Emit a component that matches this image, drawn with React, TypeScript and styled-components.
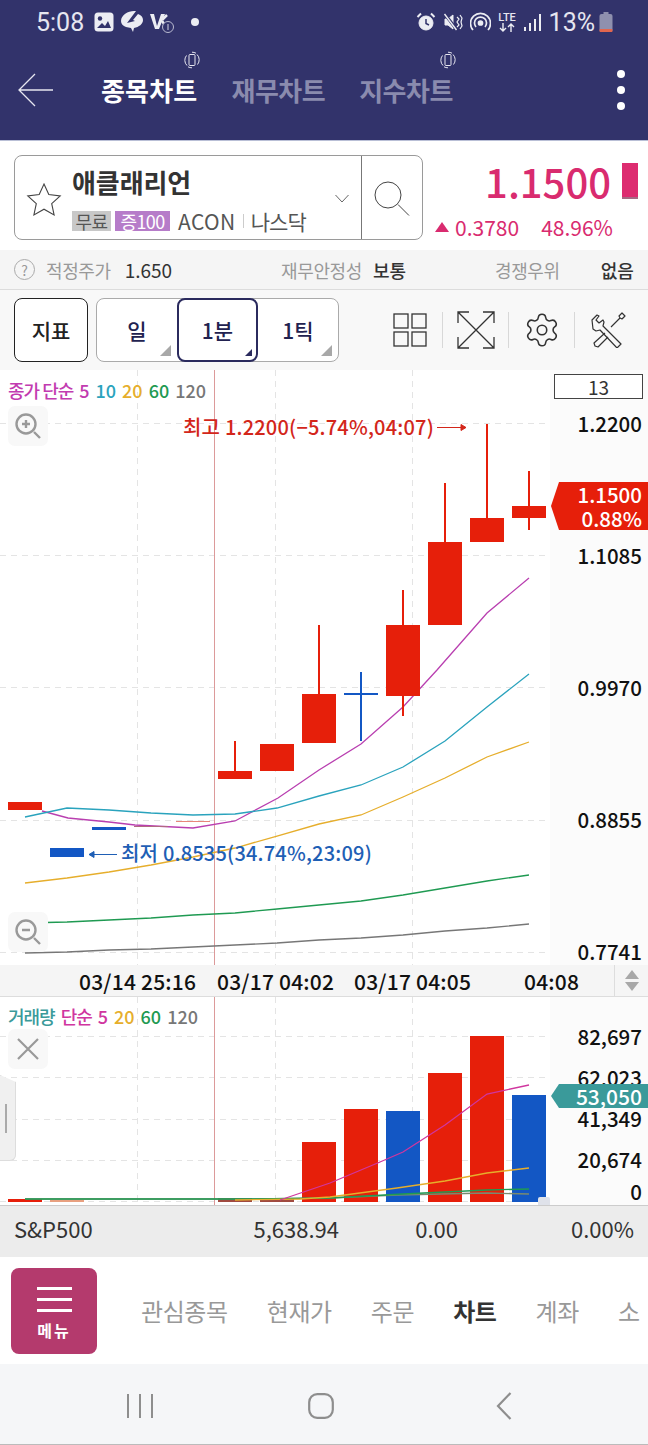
import React from "react";
import styled, { createGlobalStyle } from "styled-components";
import { Settings } from "lucide-react";

const KR = `"Noto Sans CJK KR", "Noto Sans", sans-serif`;

const GlobalStyle = createGlobalStyle`
  html, body {
    margin: 0;
    padding: 0;
    background: #fff;
    font-family: ${KR};
  }
  * {
    box-sizing: border-box;
  }
`;

const Page = styled.div`
  width: 648px;
  height: 1445px;
  position: relative;
  overflow: hidden;
`;

/* ---------- header ---------- */

const Header = styled.header`
  height: 141px;
  background: #32336b;
  border-bottom: 1px solid #b9bfd6;
`;

const StatusBar = styled.div`
  height: 44px;
  display: flex;
  align-items: center;
  justify-content: space-between;
  padding: 0 35px 0 36px;
  color: #e6e6f0;
  font-family: Roboto, sans-serif;
  font-size: 25px;
`;

const StatusGroup = styled.div<{ $gap: number }>`
  display: flex;
  align-items: center;
  gap: ${(p) => p.$gap}px;
`;

const StatusTime = styled.span`
  width: 48px;
  margin-right: 4px;
  white-space: nowrap;
`;

const StatusDot = styled.span`
  width: 8px;
  height: 8px;
  margin-left: 10px;
  border-radius: 50%;
  background: #ecedf3;
`;

const StatusLte = styled.div`
  width: 19px;
  display: flex;
  flex-direction: column;
  align-items: center;
  font-size: 11px;
  line-height: 11px;
  font-weight: 500;
`;

const BatterySlot = styled.span`
  display: flex;
  margin-left: -3px;
`;

const NavRow = styled.nav`
  height: 92px;
  display: flex;
  align-items: center;
  padding: 0 23px 0 18px;
`;

const BackButton = styled.div`
  width: 83px;
  display: flex;
  align-items: center;
`;

const Tabs = styled.div`
  display: flex;
  gap: 34px;
  flex: 1;
`;

const Tab = styled.div<{ $active?: boolean }>`
  position: relative;
  font-size: 26px;
  line-height: 34px;
  font-weight: 700;
  letter-spacing: ${(p) => (p.$active ? "0.2px" : "-0.5px")};
  color: ${(p) => (p.$active ? "#ffffff" : "#8a8bae")};
`;

const RotateBadge = styled.span<{ $left: number }>`
  position: absolute;
  left: ${(p) => p.$left}px;
  top: -22px;
  display: flex;
`;

const Kebab = styled.div`
  display: flex;
  flex-direction: column;
  gap: 8px;
`;

const KebabDot = styled.span`
  width: 8px;
  height: 8px;
  border-radius: 50%;
  background: #fff;
`;

/* ---------- stock header ---------- */

const StockSection = styled.section`
  height: 109px;
  display: flex;
  padding: 14px 14px 0;
  background: #fff;
`;

const StockBox = styled.div`
  flex: none;
  width: 409px;
  height: 85px;
  display: flex;
  border: 1px solid #9a9a9a;
  border-radius: 8px;
`;

const StarCell = styled.div`
  width: 57px;
  display: flex;
  align-items: center;
  padding: 4px 0 0 11px;
`;

const StockInfo = styled.div`
  flex: 1;
  display: flex;
  flex-direction: column;
  padding-top: 8px;
`;

const StockName = styled.div`
  font-size: 26px;
  line-height: 36px;
  font-weight: 700;
  letter-spacing: -0.1px;
  color: #333;
`;

const StockMeta = styled.div`
  display: flex;
  align-items: center;
  margin-top: 10px;
  font-size: 21px;
  line-height: 22px;
  color: #555;
`;

const Tag = styled.span<{ $bg: string; $fg: string; $w: number }>`
  width: ${(p) => p.$w}px;
  height: 20px;
  margin-right: 4px;
  display: flex;
  align-items: center;
  justify-content: center;
  font-size: 18px;
  letter-spacing: -0.6px;
  background: ${(p) => p.$bg};
  color: ${(p) => p.$fg};
`;

const MetaCode = styled.span`
  margin-left: 4px;
  letter-spacing: 0.4px;
`;

const MetaSplit = styled.span`
  width: 1px;
  height: 14px;
  margin: 0 7px 0 7px;
  background: #ccc;
`;

const MetaMarket = styled.span`
  letter-spacing: -0.9px;
`;

const ChevronCell = styled.div`
  width: 26px;
  display: flex;
  align-items: center;
  padding-top: 1px;
`;

const SearchCell = styled.div`
  width: 61px;
  display: flex;
  align-items: center;
  justify-content: center;
  border-left: 1px solid #777;
`;

const PriceCol = styled.div`
  flex: 1;
  display: flex;
  flex-direction: column;
  align-items: flex-end;
  color: #d92b6f;
`;

const PriceRow = styled.div`
  display: flex;
  align-items: center;
  gap: 11px;
  margin: 4px -4px 0 0;
  height: 44px;
`;

const PriceValue = styled.span`
  font-size: 40px;
  line-height: 44px;
  font-weight: 500;
`;

const PriceBar = styled.span`
  width: 16px;
  height: 36px;
  background: #dd2c70;
  border-bottom: 2px solid #a56a84;
`;

const ChangeRow = styled.div`
  width: 199px;
  margin-top: 11px;
  display: flex;
  align-items: center;
  font-size: 21px;
  line-height: 26px;
`;

const UpMark = styled.span`
  width: 0;
  height: 0;
  margin: 0 6px 0 0;
  border-left: 7px solid transparent;
  border-right: 7px solid transparent;
  border-bottom: 10px solid #d92b6f;
`;

const ChangePct = styled.span`
  margin-left: 22px;
`;

/* ---------- info row ---------- */

const InfoRow = styled.div`
  height: 40px;
  display: flex;
  align-items: center;
  padding: 0 14px;
  background: #f5f5f5;
  border-bottom: 1px solid #dcdcdc;
  font-size: 18px;
`;

const HelpMark = styled.span`
  width: 21px;
  height: 21px;
  margin-right: 11px;
  display: flex;
  align-items: center;
  justify-content: center;
  border: 1px solid #aaa;
  border-radius: 50%;
  font-size: 14px;
  color: #999;
`;

const InfoLabel = styled.span<{ $left?: number }>`
  margin-left: ${(p) => p.$left ?? 0}px;
  color: #999;
  letter-spacing: -0.4px;
`;

const InfoValue = styled.span<{ $left: number; $bold?: boolean }>`
  margin-left: ${(p) => p.$left}px;
  color: #333;
  font-size: ${(p) => (p.$bold ? 18 : 19)}px;
  font-weight: ${(p) => (p.$bold ? 500 : 400)};
`;

/* ---------- toolbar ---------- */

const Toolbar = styled.div`
  height: 80px;
  display: flex;
  align-items: center;
  padding: 0 14px;
  background: #f8f8f8;
`;

const IndicatorButton = styled.div`
  flex: none;
  width: 74px;
  height: 64px;
  display: flex;
  align-items: center;
  justify-content: center;
  background: #fff;
  border: 1.5px solid #222;
  border-radius: 8px;
  font-size: 21px;
  font-weight: 500;
  color: #222;
`;

const Segments = styled.div`
  flex: none;
  width: 243px;
  height: 64px;
  margin-left: 8px;
  display: grid;
  grid-template-columns: 80px 81px 80px;
  background: #fff;
  border: 1px solid #aaa;
  border-radius: 8px;
`;

const Segment = styled.div<{ $active?: boolean }>`
  position: relative;
  margin: ${(p) => (p.$active ? "-1px 0" : "0")};
  display: flex;
  align-items: center;
  justify-content: center;
  border: ${(p) => (p.$active ? "2px solid #2b2b5e" : "none")};
  border-radius: 8px;
  font-size: 21px;
  font-weight: 500;
  color: #222250;

  &::after {
    content: "";
    position: absolute;
    right: ${(p) => (p.$active ? "4px" : "6px")};
    bottom: ${(p) => (p.$active ? "4px" : "5px")};
    width: 0;
    height: 0;
    border-style: solid;
    border-width: ${(p) => (p.$active ? "0 0 7px 7px" : "0 0 11px 11px")};
    border-color: transparent transparent ${(p) => (p.$active ? "#2b2b5e" : "#a8a8a8")} transparent;
  }
`;

const ToolIcons = styled.div`
  flex: none;
  margin-left: 38px;
  display: flex;
  align-items: center;
`;

const ToolCell = styled.div<{ $sep?: boolean }>`
  width: 66px;
  height: 36px;
  display: flex;
  align-items: center;
  justify-content: center;
  border-right: ${(p) => (p.$sep ? "1px solid #d8d8d8" : "none")};
`;

/* ---------- chart panels ---------- */

const ChartPanel = styled.div`
  position: relative;
  height: 595px;
  display: flex;
  background: #fff;
`;

const Plot = styled.svg`
  display: block;
  flex: none;
  width: 550px;
`;

const PriceAxis = styled.div`
  flex: 1;
  display: flex;
  flex-direction: column;
  align-items: flex-end;
  padding: 4px 6px 0 0;
  background: #fbfbfb;
`;

const CountBox = styled.div`
  width: 89px;
  height: 25px;
  margin-right: -1px;
  display: flex;
  align-items: center;
  justify-content: center;
  border: 1px solid #444;
  background: #fff;
  font-size: 19px;
  color: #333;
`;

const PriceTicks = styled.div`
  margin-top: 13px;
  display: flex;
  flex-direction: column;
  align-items: flex-end;
  gap: 110px;
`;

const AxisTick = styled.div`
  height: 22px;
  font-size: 20.5px;
  line-height: 22px;
  font-weight: 500;
  color: #111;
`;

const Legend = styled.div<{ $top: number }>`
  position: absolute;
  left: 8px;
  top: ${(p) => p.$top}px;
  display: flex;
  gap: 6px;
  font-size: 18px;
  line-height: 22px;
  font-weight: 500;
`;

const LegendItem = styled.span<{ $color: string; $tight?: boolean }>`
  color: ${(p) => p.$color};
  letter-spacing: ${(p) => (p.$tight ? "-1px" : "0")};
`;

const FloatButton = styled.div<{ $top: number }>`
  position: absolute;
  left: 8px;
  top: ${(p) => p.$top}px;
  width: 40px;
  height: 40px;
  display: flex;
  align-items: center;
  justify-content: center;
  background: #f8f8f8;
  border-radius: 7px;
`;

const PriceTag = styled.div`
  position: absolute;
  right: 0;
  top: 112px;
  width: 97px;
  height: 48px;
  padding-right: 6px;
  text-align: right;
  background: #e61f0a;
  clip-path: polygon(8px 0, 100% 0, 100% 100%, 8px 100%, 0 50%);
  color: #fff;
  font-size: 20.5px;
  line-height: 24px;
  font-weight: 500;
`;

const TagLine = styled.div`
  height: 24px;
`;

const TimeAxis = styled.div`
  height: 32px;
  display: flex;
  align-items: center;
  padding-left: 79px;
  background: #f5f5f5;
  border-bottom: 1px solid #ddd;
  font-size: 21px;
  font-weight: 500;
  letter-spacing: 0.2px;
  color: #111;
`;

const TimeLabel = styled.span<{ $w: number }>`
  width: ${(p) => p.$w}px;
  white-space: nowrap;
`;

const Stepper = styled.div`
  margin-left: auto;
  width: 34px;
  height: 31px;
  display: flex;
  flex-direction: column;
  align-items: center;
  justify-content: center;
  gap: 3px;
  border-left: 1px solid #ddd;
`;

const StepArrow = styled.span<{ $up?: boolean }>`
  width: 0;
  height: 0;
  border-left: 7px solid transparent;
  border-right: 7px solid transparent;
  ${(p) => (p.$up ? "border-bottom" : "border-top")}: 9px solid #a8a8a8;
`;

const VolumePanel = styled.div`
  position: relative;
  height: 208px;
  display: flex;
  background: #fff;
`;

const VolumeAxis = styled.div`
  flex: 1;
  display: flex;
  flex-direction: column;
  align-items: flex-end;
  gap: 19px;
  padding: 28px 6px 0 0;
  background: #fbfbfb;
`;

const VolumeTick = styled(AxisTick)`
  &:last-of-type {
    margin-top: -9px;
  }
`;

const VolumeTag = styled.div`
  position: absolute;
  right: 0;
  top: 87px;
  width: 97px;
  height: 24px;
  padding-right: 6px;
  text-align: right;
  background: #3a9a9a;
  clip-path: polygon(8px 0, 100% 0, 100% 100%, 8px 100%, 0 50%);
  color: #fff;
  font-size: 21px;
  line-height: 24px;
  font-weight: 500;
`;

const SideHandle = styled.div`
  position: absolute;
  left: 0;
  top: 78px;
  width: 16px;
  height: 86px;
  display: flex;
  align-items: center;
  padding-left: 5px;
  background: #f0f0f0;
  border: 1px solid #ddd;
  border-left: none;
  border-radius: 0 6px 6px 0;
  clip-path: polygon(0 0, 100% 7px, 100% 100%, 0 100%);
`;

const HandleBar = styled.span`
  width: 2px;
  height: 29px;
  background: #aaa;
`;

const CornerGrip = styled.div`
  position: absolute;
  left: 538px;
  bottom: 0;
  width: 12px;
  height: 8px;
  background: #dfe2ea;
  border-radius: 2px 2px 0 0;
`;

const IndexRow = styled.div`
  height: 52px;
  display: grid;
  grid-template-columns: 100px 225px 119px 176px;
  align-items: center;
  padding: 0 0 7px 14px;
  background: #ececec;
  border-top: 1px solid #ccc;
  font-size: 22px;
  color: #333;
`;

const IndexCell = styled.span<{ $left?: boolean }>`
  text-align: ${(p) => (p.$left ? "left" : "right")};
`;

/* ---------- bottom ---------- */

const BottomMenu = styled.div`
  height: 107px;
  display: flex;
  align-items: center;
  padding-left: 11px;
  background: #fff;
  overflow: hidden;
`;

const MenuButton = styled.div`
  flex: none;
  width: 86px;
  height: 86px;
  display: flex;
  flex-direction: column;
  align-items: center;
  padding-top: 19px;
  background: #b43a6d;
  border-radius: 8px;
  color: #fff;
`;

const MenuLine = styled.span`
  width: 35px;
  height: 3px;
  margin-bottom: 8px;
  background: #fff;
`;

const MenuText = styled.span`
  font-size: 16px;
  line-height: 20px;
  font-weight: 700;
  letter-spacing: 2px;
`;

const MenuTabs = styled.div`
  margin-left: 44px;
  display: flex;
  gap: 39px;
  white-space: nowrap;
`;

const MenuTab = styled.span<{ $active?: boolean }>`
  font-size: 24px;
  line-height: 30px;
  letter-spacing: -0.4px;
  font-weight: ${(p) => (p.$active ? 700 : 400)};
  color: ${(p) => (p.$active ? "#333" : "#999")};
`;

const SystemNav = styled.div`
  height: 81px;
  display: grid;
  grid-template-columns: 216px 216px 216px;
  padding-top: 3px;
  background: #f5f6f8;
  border-bottom: 1px solid #bbb;
`;

const SystemCell = styled.div<{ $shift: number }>`
  display: flex;
  align-items: center;
  justify-content: center;
  transform: translateX(${(p) => p.$shift}px);
`;

/* ---------- data ---------- */

type Candle = { x: number; top: number; bottom: number; hi?: number; lo?: number; color: string };

const RED = "#e61f0a";
const BLUE = "#1357c4";

const candles: Candle[] = [
  { x: 25, top: 802, bottom: 810, color: RED },
  { x: 67, top: 848, bottom: 857, color: BLUE },
  { x: 109, top: 827, bottom: 830, color: BLUE },
  { x: 151, top: 826, bottom: 827, color: "#b06a80" },
  { x: 193, top: 821, bottom: 822, color: "#e8867a" },
  { x: 235, top: 771, bottom: 779, hi: 741, color: RED },
  { x: 277, top: 744, bottom: 771, color: RED },
  { x: 319, top: 694, bottom: 743, hi: 625, color: RED },
  { x: 361, top: 693, bottom: 695, hi: 672, lo: 741, color: BLUE },
  { x: 403, top: 625, bottom: 696, hi: 590, lo: 716, color: RED },
  { x: 445, top: 542, bottom: 625, hi: 483, color: RED },
  { x: 487, top: 518, bottom: 542, hi: 424, color: RED },
  { x: 529, top: 506, bottom: 518, hi: 471, lo: 530, color: RED },
];

const priceLines = [
  {
    color: "#b93fb0",
    pts: "42,811 68,818 109,822 135,825 193,828 235,821 278,798 319,770 361,744 403,707 437,670 487,613 529,578",
  },
  {
    color: "#2aa3bd",
    pts: "25,817 67,808 109,810 151,813 193,815 235,814 277,808 319,796 361,785 403,767 445,741 487,707 529,674",
  },
  {
    color: "#e6ae2c",
    pts: "25,883 67,878 109,872 151,865 193,857 235,848 277,836 319,824 361,815 403,797 445,778 487,757 529,742",
  },
  {
    color: "#1f9a52",
    pts: "25,923 67,922 109,920 151,918 193,915 235,913 277,909 319,905 361,901 403,895 445,888 487,881 529,875",
  },
  {
    color: "#777777",
    pts: "25,953 67,952 109,950 151,949 193,947 235,945 277,943 319,940 361,938 403,935 445,931 487,928 529,924",
  },
];

const bars = [
  { x: 25, top: 1199, color: RED },
  { x: 67, top: 1200, color: "#e8a080" },
  { x: 235, top: 1198, color: "#a04a40" },
  { x: 277, top: 1198, color: "#a04a40" },
  { x: 319, top: 1142, color: RED },
  { x: 361, top: 1109, color: RED },
  { x: 403, top: 1111, color: BLUE },
  { x: 445, top: 1073, color: RED },
  { x: 487, top: 1036, color: RED },
  { x: 529, top: 1095, color: BLUE },
];

const volumeLines = [
  { color: "#7a8a70", pts: "25,1199 150,1199 235,1199 330,1198 397,1195 487,1193 529,1194" },
  { color: "#1f9a52", pts: "25,1199 235,1199 330,1198 403,1194 487,1190 529,1189" },
  { color: "#e6ae2c", pts: "235,1200 300,1199 330,1197 397,1188 445,1181 487,1173 529,1168" },
  { color: "#d0369f", pts: "280,1200 330,1183 380,1162 403,1152 445,1125 487,1094 529,1085" },
];

const gridX = [137.5, 275.5, 412.5];

/* ---------- icons ---------- */

const RotateIcon = () => (
  <svg width="18" height="18" viewBox="0 0 18 18" fill="none" stroke="#e6e6f0" strokeWidth="1">
    <rect x="6" y="3.5" width="6" height="11" rx="1" />
    <path d="M3.5 4.5A7.5 7.5 0 0 0 4 14.5M14.5 13.5A7.5 7.5 0 0 0 14 3.5M9 1.2a7.8 7.8 0 0 1 4 1M9 16.8a7.8 7.8 0 0 1-4-1" />
  </svg>
);

const StatusLeftIcons = () => (
  <>
    <svg width="20" height="20" viewBox="0 0 20 20">
      <rect x="0.5" y="0.5" width="19" height="19" rx="3.5" fill="#ecedf3" />
      <circle cx="6" cy="6.5" r="2.2" fill="#32336b" />
      <path d="M3 16l5-5 3 3 3-5 3 7z" fill="#32336b" />
    </svg>
    <svg width="24" height="24" viewBox="0 0 24 24" fill="#ecedf3">
      <path d="M14 1C8 1 1 5 1 11c0 3 2 5 5 6l5 1 2 4 1-4c5-1 9-4 9-8 0-3-2-5-5-6l-5 6 2 1-8 2 9-12z" />
    </svg>
    <svg width="25" height="24" viewBox="0 0 25 24">
      <path d="M0 4h4l3 12L11 4h4L9 19H5z" fill="#ecedf3" />
      <path d="M12 10l5-5M12 11l5 7" stroke="#ecedf3" strokeWidth="2.5" />
      <circle cx="18" cy="17" r="5.5" fill="#32336b" stroke="#b9bad0" strokeWidth="1" />
      <path d="M18 14v6" stroke="#b9bad0" strokeWidth="1.2" />
    </svg>
  </>
);

const StatusRightIcons = () => (
  <>
    <svg width="20" height="20" viewBox="0 0 20 20" fill="none" stroke="#ecedf3">
      <circle cx="10" cy="11" r="7" fill="#ecedf3" />
      <path d="M10 7v4.5l3 1.5" stroke="#32336b" strokeWidth="1.5" />
      <path d="M1.5 5L5 1.5M18.5 5L15 1.5" strokeWidth="2" />
    </svg>
    <svg width="20" height="20" viewBox="0 0 20 20" fill="none" stroke="#ecedf3">
      <path d="M2 7h3l5-4v14l-5-4H2z" fill="#ecedf3" />
      <path d="M1 1l13 17" stroke="#32336b" strokeWidth="3" />
      <path d="M1.5 2l12 16" strokeWidth="1.4" />
      <path d="M14 5l2 2-2 3 2 3-2 2M17 3l2 3-1 4 1 4-2 3" strokeWidth="1.2" />
    </svg>
    <svg width="21" height="20" viewBox="0 0 21 20" fill="none" stroke="#ecedf3" strokeWidth="1.7">
      <circle cx="10.5" cy="11" r="2" fill="#ecedf3" />
      <path d="M6 15a6 6 0 1 1 9 0M3 18a10 10 0 1 1 15 0" />
    </svg>
    <StatusLte>
      <span>LTE</span>
      <svg width="18" height="9" viewBox="0 0 18 9" fill="none" stroke="#ecedf3" strokeWidth="1.4">
        <path d="M5 0v8M2 5l3 3 3-3M13 9V1M10 4l3-3 3 3" />
      </svg>
    </StatusLte>
    <svg width="18" height="18" viewBox="0 0 18 18" fill="#ecedf3">
      <rect x="0" y="14" width="2" height="4" />
      <rect x="5" y="10" width="2" height="8" />
      <rect x="10" y="6" width="2" height="12" />
      <rect x="15" y="1" width="2" height="17" />
    </svg>
  </>
);

const BatteryIcon = () => (
  <svg width="14" height="20" viewBox="0 0 14 20">
    <rect x="4.5" y="0" width="5" height="2" fill="#8f90ae" />
    <rect x="0.5" y="2" width="13" height="18" rx="2" fill="#8f90ae" />
    <rect x="0.5" y="17" width="13" height="3" rx="1" fill="#e2664e" />
  </svg>
);

const StarIcon = () => (
  <svg width="36" height="36" viewBox="0 0 36 36" fill="none" stroke="#444" strokeWidth="1.1">
    <path d="M18 2l4.8 10.6 11.4 1.3-8.5 7.7 2.4 11.4L18 27.2 7.9 33l2.4-11.4-8.5-7.7 11.4-1.3z" />
  </svg>
);

const SearchIcon = () => (
  <svg width="36" height="36" viewBox="0 0 36 36" fill="none" stroke="#444" strokeWidth="1">
    <circle cx="14" cy="15" r="13" />
    <path d="M24 24.5l11 11" />
  </svg>
);

const Tools = () => (
  <svg width="36" height="36" viewBox="0 0 36 36" fill="none" stroke="#333" strokeWidth="1.2" strokeLinejoin="round">
    <path d="M2 8l5-5 2 1-3 4 3 3 4-3 1 2-1 4 18 18-4 4L10 18l-4 1-3-2z" />
    <path d="M21 15l9-9-1-2 3-3 3 3-3 3-2-1-9 9M15 21L4 31l1 3 3 1 10-10" />
  </svg>
);

const NavIcons = {
  bars: (
    <svg width="26" height="26" viewBox="0 0 26 26" stroke="#8e8e8e" strokeWidth="2">
      <path d="M1 1v24M13 1v24M25 1v24" />
    </svg>
  ),
  home: (
    <svg width="26" height="26" viewBox="0 0 26 26" fill="none" stroke="#8e8e8e" strokeWidth="2.2">
      <rect x="1.2" y="1.2" width="23.6" height="23.6" rx="8" />
    </svg>
  ),
  back: (
    <svg width="16" height="28" viewBox="0 0 16 28" fill="none" stroke="#8e8e8e" strokeWidth="2.2">
      <path d="M14.5 1L2 14l12.5 13" />
    </svg>
  ),
};

const GridLines = ({ ys, top, bottom }: { ys: number[]; top: number; bottom: number }) => (
  <g stroke="#e4e4e4" strokeWidth="1" strokeDasharray="6 5">
    {ys.map((y) => (
      <line key={y} x1="0" x2="550" y1={y + 0.5} y2={y + 0.5} />
    ))}
    {gridX.map((x) => (
      <line key={x} x1={x} x2={x} y1={top} y2={bottom} />
    ))}
  </g>
);

const App: React.FC = () => {
  return (
    <Page>
      <GlobalStyle />
      <Header>
        <StatusBar>
          <StatusGroup $gap={6}>
            <StatusTime>5:08</StatusTime>
            <StatusLeftIcons />
            <StatusDot />
          </StatusGroup>
          <StatusGroup $gap={7}>
            <StatusRightIcons />
            <span>13%</span>
            <BatterySlot>
              <BatteryIcon />
            </BatterySlot>
          </StatusGroup>
        </StatusBar>
        <NavRow>
          <BackButton>
            <svg width="36" height="34" viewBox="0 0 36 34" fill="none" stroke="#e6e6f0" strokeWidth="1.3">
              <path d="M35 17H1M17 1L1 17l16 16" />
            </svg>
          </BackButton>
          <Tabs>
            <Tab $active>
              종목차트
              <RotateBadge $left={82}>
                <RotateIcon />
              </RotateBadge>
            </Tab>
            <Tab>재무차트</Tab>
            <Tab>
              지수차트
              <RotateBadge $left={80}>
                <RotateIcon />
              </RotateBadge>
            </Tab>
          </Tabs>
          <Kebab>
            <KebabDot />
            <KebabDot />
            <KebabDot />
          </Kebab>
        </NavRow>
      </Header>

      <StockSection>
        <StockBox>
          <StarCell>
            <StarIcon />
          </StarCell>
          <StockInfo>
            <StockName>애클래리언</StockName>
            <StockMeta>
              <Tag $bg="#c8c8c8" $fg="#555" $w={39}>
                무료
              </Tag>
              <Tag $bg="#b67cc9" $fg="#fff" $w={55}>
                증100
              </Tag>
              <MetaCode>ACON</MetaCode>
              <MetaSplit />
              <MetaMarket>나스닥</MetaMarket>
            </StockMeta>
          </StockInfo>
          <ChevronCell>
            <svg width="14" height="9" viewBox="0 0 14 9" fill="none" stroke="#666" strokeWidth="1">
              <path d="M0.5 1L7 8l6.5-7" />
            </svg>
          </ChevronCell>
          <SearchCell>
            <SearchIcon />
          </SearchCell>
        </StockBox>
        <PriceCol>
          <PriceRow>
            <PriceValue>1.1500</PriceValue>
            <PriceBar />
          </PriceRow>
          <ChangeRow>
            <UpMark />
            <span>0.3780</span>
            <ChangePct>48.96%</ChangePct>
          </ChangeRow>
        </PriceCol>
      </StockSection>

      <InfoRow>
        <HelpMark>?</HelpMark>
        <InfoLabel>적정주가</InfoLabel>
        <InfoValue $left={14}>1.650</InfoValue>
        <InfoLabel $left={109}>재무안정성</InfoLabel>
        <InfoValue $left={11} $bold>
          보통
        </InfoValue>
        <InfoLabel $left={89}>경쟁우위</InfoLabel>
        <InfoValue $left={41} $bold>
          없음
        </InfoValue>
      </InfoRow>

      <Toolbar>
        <IndicatorButton>지표</IndicatorButton>
        <Segments>
          <Segment>일</Segment>
          <Segment $active>1분</Segment>
          <Segment>1틱</Segment>
        </Segments>
        <ToolIcons>
          <ToolCell $sep>
            <svg width="34" height="34" viewBox="0 0 34 34" fill="none" stroke="#333" strokeWidth="1.3">
              <rect x="1" y="1" width="14" height="14" />
              <rect x="19" y="1" width="14" height="14" />
              <rect x="1" y="19" width="14" height="14" />
              <rect x="19" y="19" width="14" height="14" />
            </svg>
          </ToolCell>
          <ToolCell $sep>
            <svg width="38" height="38" viewBox="0 0 38 38" fill="none" stroke="#333" strokeWidth="1.3">
              <path d="M1 12V1h11M26 1h11v11M37 26v11H26M12 37H1V26M1 1l36 36M37 1L1 37" />
            </svg>
          </ToolCell>
          <ToolCell $sep>
            <Settings size={38} strokeWidth={1} color="#333" />
          </ToolCell>
          <ToolCell>
            <Tools />
          </ToolCell>
        </ToolIcons>
      </Toolbar>

      <ChartPanel>
        <Plot viewBox="0 370 550 595" height="595">
          <GridLines ys={[423, 555, 687, 820, 952]} top={370} bottom={965} />
          <line x1="214.5" x2="214.5" y1="370" y2="965" stroke="#dc9a9a" strokeWidth="1" />
          {priceLines.map((l) => (
            <polyline key={l.color} points={l.pts} fill="none" stroke={l.color} strokeWidth="1.3" />
          ))}
          {candles.map((c) => (
            <g key={c.x} fill={c.color} stroke="none">
              {c.hi !== undefined && <rect x={c.x - 1} y={c.hi} width="2" height={c.top - c.hi} />}
              {c.lo !== undefined && <rect x={c.x - 1} y={c.bottom} width="2" height={c.lo - c.bottom} />}
              <rect x={c.x - 17} y={c.top} width="34" height={c.bottom - c.top} />
            </g>
          ))}
          <text x="183" y="435" fontSize="20" letterSpacing="0.2" fontWeight="500" fill="#d3261a" fontFamily={KR}>
            최고 1.2200(−5.74%,04:07)
          </text>
          <path d="M437 427.5h29M461 424.5l5 3-5 3z" stroke="#d3261a" fill="#d3261a" strokeWidth="1" />
          <text x="121" y="861" fontSize="20" letterSpacing="0.2" fontWeight="500" fill="#1f5fb5" fontFamily={KR}>
            최저 0.8535(34.74%,23:09)
          </text>
          <path d="M117 854.5H89M94 851.5l-5 3 5 3z" stroke="#1f5fb5" fill="#1f5fb5" strokeWidth="1" />
        </Plot>
        <PriceAxis>
          <CountBox>13</CountBox>
          <PriceTicks>
            <AxisTick>1.2200</AxisTick>
            <AxisTick>1.1085</AxisTick>
            <AxisTick>0.9970</AxisTick>
            <AxisTick>0.8855</AxisTick>
            <AxisTick>0.7741</AxisTick>
          </PriceTicks>
        </PriceAxis>
        <Legend $top={9}>
          <LegendItem $color="#c23bb0" $tight>
            종가 단순
          </LegendItem>
          <LegendItem $color="#c23bb0">5</LegendItem>
          <LegendItem $color="#2aa3bd">10</LegendItem>
          <LegendItem $color="#e6ae2c">20</LegendItem>
          <LegendItem $color="#1f9a52">60</LegendItem>
          <LegendItem $color="#777">120</LegendItem>
        </Legend>
        <FloatButton $top={36}>
          <svg width="28" height="28" viewBox="0 0 28 28" fill="none" stroke="#999" strokeWidth="2.4">
            <circle cx="12" cy="12" r="9.5" />
            <path d="M20 20l6 6M8 12h8M12 8v8" />
          </svg>
        </FloatButton>
        <FloatButton $top={542}>
          <svg width="28" height="28" viewBox="0 0 28 28" fill="none" stroke="#999" strokeWidth="2.4">
            <circle cx="12" cy="12" r="9.5" />
            <path d="M20 20l6 6M8 12h8" />
          </svg>
        </FloatButton>
        <PriceTag>
          <TagLine>1.1500</TagLine>
          <TagLine>0.88%</TagLine>
        </PriceTag>
      </ChartPanel>

      <TimeAxis>
        <TimeLabel $w={138}>03/14 25:16</TimeLabel>
        <TimeLabel $w={137}>03/17 04:02</TimeLabel>
        <TimeLabel $w={170}>03/17 04:05</TimeLabel>
        <TimeLabel $w={60}>04:08</TimeLabel>
        <Stepper>
          <StepArrow $up />
          <StepArrow />
        </Stepper>
      </TimeAxis>

      <VolumePanel>
        <Plot viewBox="0 997 550 208" height="208">
          <GridLines ys={[1036, 1077, 1119, 1160, 1201]} top={997} bottom={1205} />
          <line x1="214.5" x2="214.5" y1="997" y2="1205" stroke="#dc9a9a" strokeWidth="1" />
          {bars.map((b) => (
            <rect key={b.x} x={b.x - 17} y={b.top} width="34" height={1202 - b.top} fill={b.color} />
          ))}
          {volumeLines.map((l) => (
            <polyline key={l.color} points={l.pts} fill="none" stroke={l.color} strokeWidth="1.3" />
          ))}
        </Plot>
        <VolumeAxis>
          <VolumeTick>82,697</VolumeTick>
          <VolumeTick>62,023</VolumeTick>
          <VolumeTick>41,349</VolumeTick>
          <VolumeTick>20,674</VolumeTick>
          <VolumeTick>0</VolumeTick>
        </VolumeAxis>
        <Legend $top={8}>
          <LegendItem $color="#3a9a9a" $tight>
            거래량
          </LegendItem>
          <LegendItem $color="#d0369f" $tight>
            단순
          </LegendItem>
          <LegendItem $color="#d0369f">5</LegendItem>
          <LegendItem $color="#e6ae2c">20</LegendItem>
          <LegendItem $color="#1f9a52">60</LegendItem>
          <LegendItem $color="#777">120</LegendItem>
        </Legend>
        <FloatButton $top={32}>
          <svg width="24" height="24" viewBox="0 0 24 24" stroke="#999" strokeWidth="2.2">
            <path d="M2 2l20 20M22 2L2 22" />
          </svg>
        </FloatButton>
        <SideHandle>
          <HandleBar />
        </SideHandle>
        <CornerGrip />
        <VolumeTag>53,050</VolumeTag>
      </VolumePanel>

      <IndexRow>
        <IndexCell $left>S&amp;P500</IndexCell>
        <IndexCell>5,638.94</IndexCell>
        <IndexCell>0.00</IndexCell>
        <IndexCell>0.00%</IndexCell>
      </IndexRow>

      <BottomMenu>
        <MenuButton>
          <MenuLine />
          <MenuLine />
          <MenuLine />
          <MenuText>메뉴</MenuText>
        </MenuButton>
        <MenuTabs>
          <MenuTab>관심종목</MenuTab>
          <MenuTab>현재가</MenuTab>
          <MenuTab>주문</MenuTab>
          <MenuTab $active>차트</MenuTab>
          <MenuTab>계좌</MenuTab>
          <MenuTab>소</MenuTab>
        </MenuTabs>
      </BottomMenu>

      <SystemNav>
        <SystemCell $shift={32}>{NavIcons.bars}</SystemCell>
        <SystemCell $shift={-3}>{NavIcons.home}</SystemCell>
        <SystemCell $shift={-36}>{NavIcons.back}</SystemCell>
      </SystemNav>
    </Page>
  );
};

export default App;
